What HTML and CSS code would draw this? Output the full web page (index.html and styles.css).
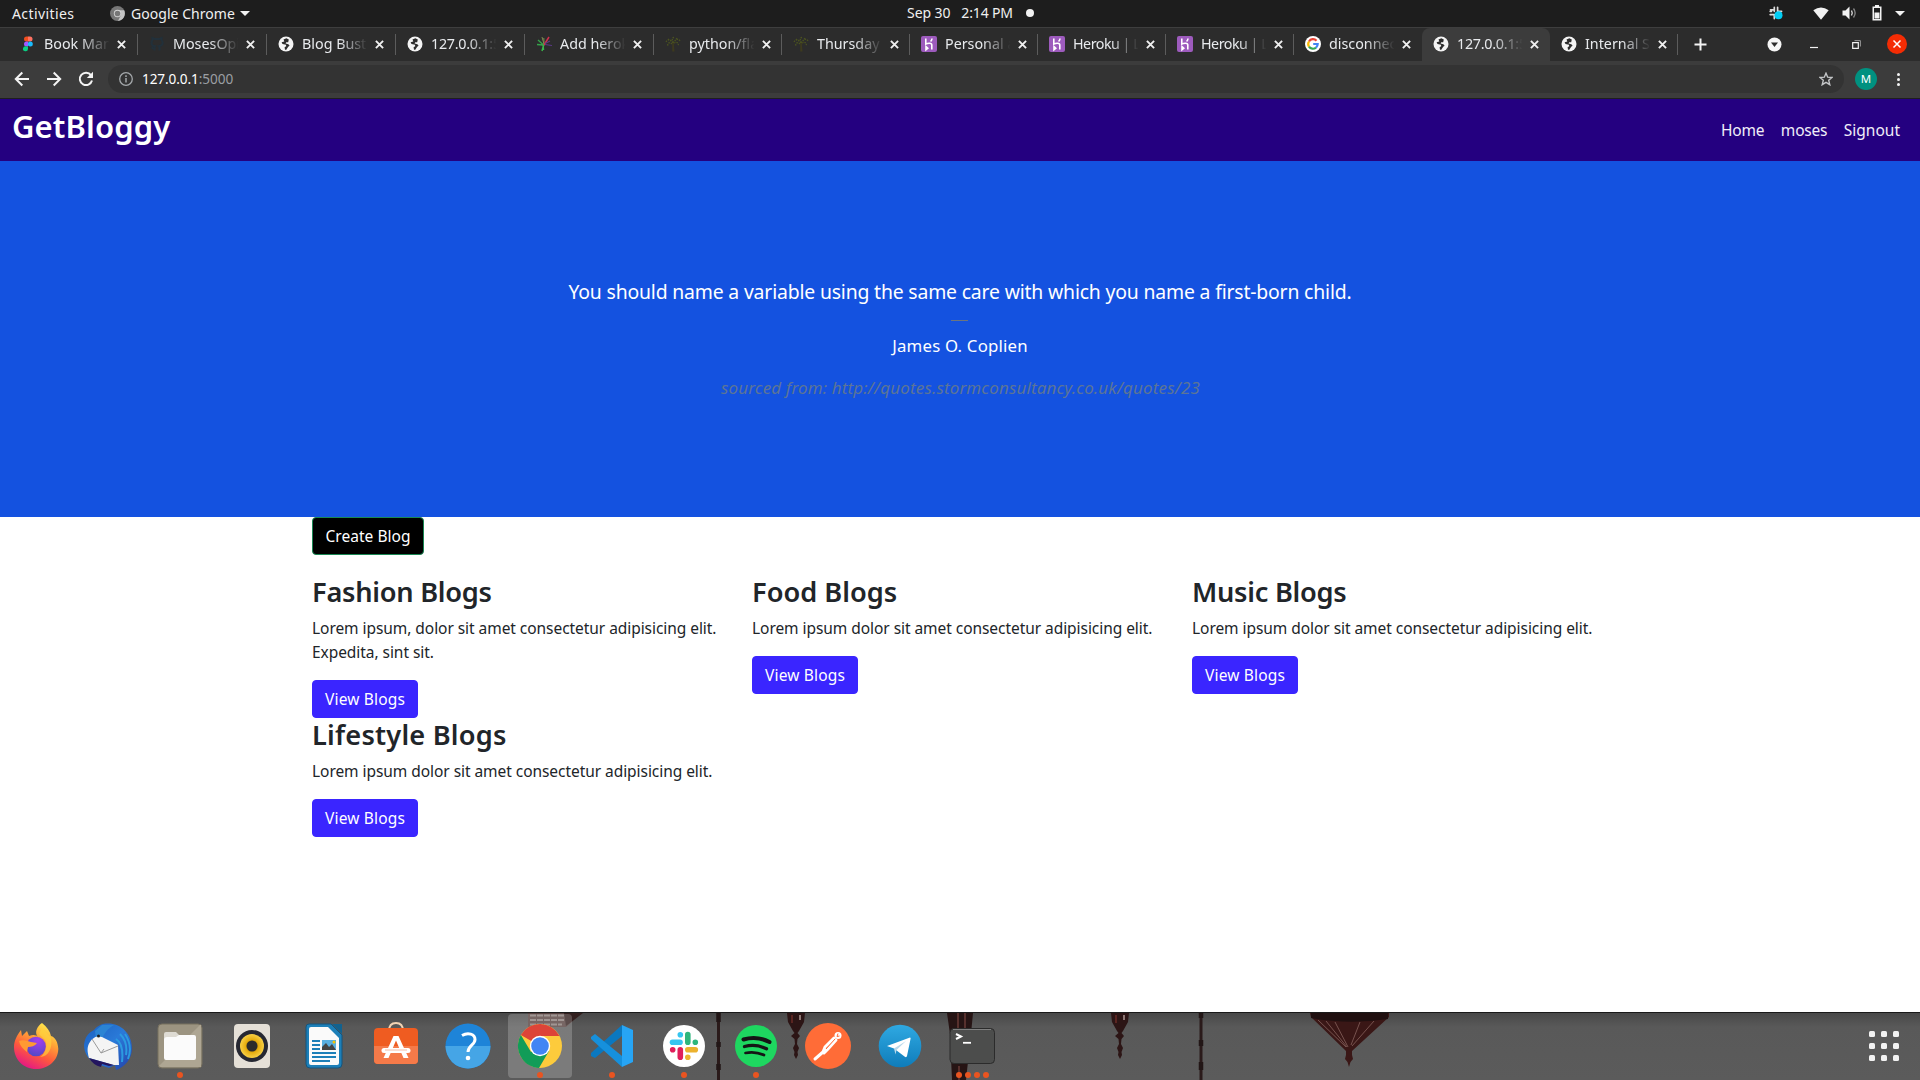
FILE: index.html
```html
<!DOCTYPE html>
<html lang="en">
<head>
<meta charset="utf-8">
<title>GetBloggy</title>
<link rel="stylesheet" href="styles.css">
</head>
<body>
<svg width="0" height="0" class="defs" aria-hidden="true">
  <defs>
    <linearGradient id="g-fox" x1="0.8" y1="0" x2="0.3" y2="1"><stop offset="0" stop-color="#fff44f"/><stop offset=".35" stop-color="#ffa436"/><stop offset=".65" stop-color="#ff5a3c"/><stop offset="1" stop-color="#e31587"/></linearGradient>
    <radialGradient id="g-globe" cx=".6" cy=".2" r=".9"><stop offset="0" stop-color="#a53df0"/><stop offset="1" stop-color="#4a4ac0"/></radialGradient>
    <linearGradient id="g-bird" x1="0" y1="0" x2="1" y2="1"><stop offset="0" stop-color="#1b5fc0"/><stop offset=".5" stop-color="#2a7ad8"/><stop offset="1" stop-color="#2440a8"/></linearGradient>
    <linearGradient id="g-tg" x1="0" y1="0" x2="0" y2="1"><stop offset="0" stop-color="#2fa9e2"/><stop offset="1" stop-color="#0f7cba"/></linearGradient>
    <radialGradient id="g-spk"><stop offset=".3" stop-color="#a87a08"/><stop offset=".55" stop-color="#e6ae10"/><stop offset="1" stop-color="#f7cf45"/></radialGradient>
  </defs>
  <symbol id="globe" viewBox="0 0 16 16"><circle cx="8" cy="8" r="7.500" fill="#f4f4f4"/><path d="M8.400 2.200 5.500 3.600 6.300 5.400 3.600 6.200 4.500 8 8 8.700 8.200 10.300 6.600 11.200 7 13.700 8.300 13.700 10.200 10.700 11.600 9.800 10.400 8.200 7.600 7.400 8.200 6.200 10.200 6.200 10.800 3.600Z" fill="#2c2c2c"/></symbol>
  <symbol id="tree" viewBox="0 0 16 16"><g fill="none" stroke="#4b5320" stroke-width="1.300" stroke-dasharray="1.500 1"><path d="M8 7C5 2 2 4 1 6M8 7C6 1 9 1 10 2M8 7C11 2 14 3 15 5M7 8C4 5 2 8 3 10M9 7C12 5 14 8 13 9M3 3L6 5M12 2L10 5"/></g><path d="M7.200 7.500V15.500H9.500L8.800 7.500 11 5.500" fill="#3d3a1e"/></symbol>
  <symbol id="heroku" viewBox="0 0 16 16"><rect width="16" height="16" rx="2" fill="#9d5bbd"/><path d="M4.800 2.500V8C7 7 10.800 6.700 10.800 9V13.500M11 2.500C11 3.800 10.400 4.700 9.600 5.500M5 10.600V13.800L6.800 12.200Z" fill="none" stroke="#fff" stroke-width="1.600"/></symbol>
  <symbol id="google" viewBox="0 0 16 16"><circle cx="8" cy="8" r="8" fill="#fff"/><g fill="none" stroke-width="2.200"><path d="M11.500 4.700A4.700 4.700 0 0 0 4 5.500" stroke="#ea4335"/><path d="M4 5.500A4.700 4.700 0 0 0 4 10.600" stroke="#fbbc05"/><path d="M4 10.600A4.700 4.700 0 0 0 11 11.600" stroke="#34a853"/><path d="M11 11.600A4.700 4.700 0 0 0 12.700 8H8.200" stroke="#4285f4"/></g></symbol>
  <symbol id="x" viewBox="0 0 8 8"><path d="M.8.8 7.200 7.200M7.200.8.8 7.200" stroke="#f0f0f0" stroke-width="1.700"/></symbol>
</svg>

<div class="desktop">
  <header class="topbar">
    <div class="top-left">
      <span class="activities">Activities</span>
      <svg class="app-icon" width="15" height="15" viewBox="0 0 16 16"><circle cx="8" cy="8" r="8" fill="#777"/><path d="M8 4.500H15A8 8 0 0 1 8.500 16L11.500 10Z" fill="#c4c4c4"/><circle cx="8" cy="8" r="3.900" fill="#d8d8d8"/><circle cx="8" cy="8" r="3" fill="#777"/></svg>
      <span class="app-name">Google Chrome</span>
      <i class="caret"></i>
    </div>
    <div class="clock"><span>Sep 30</span><span>2:14 PM</span><i class="clock-dot"></i></div>
    <div class="tray">
      <svg width="14" height="14" viewBox="0 0 14 14"><g stroke="#ddd" stroke-width="1.700" stroke-linecap="round"><path d="M5.300 1.300V5.300M8.600 1.300V5.300M1.200 5.300H2.500M1.200 8.600H5.300M5.300 8.600V12.600M8.600 5.300H12.600M1.500 3.800H4"/></g><circle cx="9.500" cy="9.200" r="4" fill="#00cdf5"/></svg>
      <svg class="wifi" width="16" height="13" viewBox="0 0 16 13"><path d="M.3 3.200Q8-2.400 15.700 3.200L8 12.800Z" fill="#f2f2f2"/></svg>
      <svg class="vol" width="16" height="14" viewBox="0 0 16 14"><path d="M.5 4.500H3.500L7.500.5V13.500L3.500 9.500H.5Z" fill="#f2f2f2"/><path d="M9.500 4.500Q11 7 9.500 9.500" fill="none" stroke="#ddd" stroke-width="1.400"/><path d="M11.500 2.500Q14.800 7 11.500 11.500" fill="none" stroke="#888" stroke-width="1.300"/></svg>
      <svg class="bat" width="10" height="16" viewBox="0 0 10 16"><path d="M3 0H7V1.500H9.500V15.500H.5V1.500H3Z" fill="#f2f2f2"/><path d="M2 3H8V14H2Z" fill="#1d1d1d"/><path d="M2.500 7.500H7.500V13.500H2.500Z" fill="#f2f2f2"/></svg>
      <i class="caret"></i>
    </div>
  </header>

  <div class="tabstrip">
    <div class="tabs">
      <div class="tab"><svg viewBox="0 0 16 16"><path d="M8 .5H6.500A2.500 2.500 0 0 0 6.500 5.500H8Z" fill="#f24e1e"/><path d="M8 .5H10A2.500 2.500 0 0 1 10 5.500H8Z" fill="#ff7262"/><path d="M8 5.500H6.500A2.500 2.500 0 0 0 6.500 10.500H8Z" fill="#a259ff"/><circle cx="10.300" cy="8" r="2.500" fill="#1abcfe"/><path d="M8 10.500H6.500A2.500 2.500 0 1 0 8 13Z" fill="#0acf83"/></svg><span>Book Mana</span><svg class="x"><use href="#x"/></svg></div>
      <div class="tab"><svg viewBox="0 0 16 16"><path d="M5.500 14.500V12.500Q3.500 12.800 2.800 11M10.500 14.500V11.500Q10.500 10.500 10 10.200C16 9 13 4.500 12.600 4V2L10.500 3H5.500L3.400 2V4C2 6.500 2 10 6 10.200L5.500 11.500" fill="none" stroke="#22303a" stroke-width="2"/></svg><span>MosesOpiy</span><svg class="x"><use href="#x"/></svg></div>
      <div class="tab"><svg><use href="#globe"/></svg><span>Blog Buste</span><svg class="x"><use href="#x"/></svg></div>
      <div class="tab"><svg><use href="#globe"/></svg><span class="ip">127.0.0.1:5</span><svg class="x"><use href="#x"/></svg></div>
      <div class="tab"><svg viewBox="0 0 16 16"><path d="M6 15 8 8M7.500 14 7 8" stroke="#39b54a" stroke-width="1.500"/><path d="M7.500 9 2 4M7 9 1 8.500" stroke="#35a34a" stroke-width="1.300"/><path d="M8 8 6 1M8 8 7.800 2" stroke="#7a8a50"/><path d="M8 9 13 1" stroke="#d22f4c" stroke-width="1.500"/><path d="M9 8.500 16 9.500M9 7.500 14 5" stroke="#5b3a86" stroke-width="1.200"/></svg><span>Add heroku</span><svg class="x"><use href="#x"/></svg></div>
      <div class="tab"><svg><use href="#tree"/></svg><span>python/flas</span><svg class="x"><use href="#x"/></svg></div>
      <div class="tab"><svg><use href="#tree"/></svg><span>Thursday S</span><svg class="x"><use href="#x"/></svg></div>
      <div class="tab"><svg><use href="#heroku"/></svg><span>Personal a</span><svg class="x"><use href="#x"/></svg></div>
      <div class="tab"><svg><use href="#heroku"/></svg><span class="hk">Heroku | Lo</span><svg class="x"><use href="#x"/></svg></div>
      <div class="tab"><svg><use href="#heroku"/></svg><span class="hk">Heroku | Lo</span><svg class="x"><use href="#x"/></svg></div>
      <div class="tab"><svg><use href="#google"/></svg><span>disconnect</span><svg class="x"><use href="#x"/></svg></div>
      <div class="tab active"><svg><use href="#globe"/></svg><span class="ip">127.0.0.1:5</span><svg class="x"><use href="#x"/></svg></div>
      <div class="tab"><svg><use href="#globe"/></svg><span>Internal Se</span><svg class="x"><use href="#x"/></svg></div>
    </div>
    <svg class="plus" width="13" height="13" viewBox="0 0 13 13"><path d="M6.500.5V12.500M.5 6.500H12.500" stroke="#f4f4f4" stroke-width="2"/></svg>
    <div class="winctl">
      <svg width="15" height="15" viewBox="0 0 15 15"><circle cx="7.500" cy="7.500" r="7" fill="#f6f6f6"/><path d="M4 5.500H11L7.500 10Z" fill="#2c2c2c"/></svg>
      <svg class="min" width="8" height="6" viewBox="0 0 8 6"><path d="M0 4.500H8" stroke="#f2f2f2" stroke-width="1.200"/></svg>
      <svg class="max" width="9" height="9" viewBox="0 0 9 9"><path d="M.7 2.700H6.300V8.300H.7Z" fill="none" stroke="#f2f2f2" stroke-width="1.200"/><path d="M2.500.6H8.400V6.500" fill="none" stroke="#999"/></svg>
      <svg class="cls" width="20" height="20" viewBox="0 0 20 20"><circle cx="10" cy="10" r="10" fill="#f42c04"/><path d="M6.500 6.500 13.500 13.500M13.500 6.500 6.500 13.500" stroke="#fff" stroke-width="1.500"/></svg>
    </div>
  </div>

  <div class="toolbar">
    <svg class="nav-ico" width="16" height="16" viewBox="0 0 16 16"><path d="M15 8H2M8.300 1.500 1.800 8 8.300 14.500" fill="none" stroke="#f4f4f4" stroke-width="2"/></svg>
    <svg class="nav-ico" width="16" height="16" viewBox="0 0 16 16"><path d="M1 8H14M7.700 1.500 14.200 8 7.700 14.500" fill="none" stroke="#f4f4f4" stroke-width="2"/></svg>
    <svg class="nav-ico" width="16" height="16" viewBox="0 0 16 16"><path d="M13 4.200A6.200 6.200 0 1 0 14 9.500" fill="none" stroke="#f4f4f4" stroke-width="2"/><path d="M15 .8V7H8.800Z" fill="#f4f4f4"/></svg>
    <div class="omnibox">
      <svg width="14" height="14" viewBox="0 0 14 14"><circle cx="7" cy="7" r="6.300" fill="none" stroke="#a4a8ab" stroke-width="1.300"/><path d="M7 6V10.500M7 3.300V4.900" stroke="#a4a8ab" stroke-width="1.500"/></svg>
      <span class="url">127.0.0.1<em>:5000</em></span>
      <svg class="star" width="14" height="14" viewBox="0 0 14 14"><path d="M7 1.200 8.700 5.200 13 5.500 9.700 8.300 10.800 12.700 7 10.300 3.200 12.700 4.300 8.300 1 5.500 5.300 5.200Z" fill="none" stroke="#c4c6c8" stroke-width="1.400"/></svg>
    </div>
    <div class="avatar">M</div>
    <div class="kebab"><i></i><i></i><i></i></div>
  </div>

  <main class="page">
    <nav class="navbar">
      <a class="brand">GetBloggy</a>
      <div class="links"><a>Home</a><a>moses</a><a class="out">Signout</a></div>
    </nav>
    <section class="hero">
      <p class="quote">You should name a variable using the same care with which you name a first-born child.</p>
      <i class="dash"></i>
      <p class="author">James O. Coplien</p>
      <p class="source">sourced from: http://quotes.stormconsultancy.co.uk/quotes/23</p>
    </section>
    <div class="container">
      <button class="btn create">Create Blog</button>
      <div class="row">
        <article><h3>Fashion Blogs</h3><p>Lorem ipsum, dolor sit amet consectetur adipisicing elit. Expedita, sint sit.</p><button class="btn">View Blogs</button></article>
        <article><h3 class="food">Food Blogs</h3><p>Lorem ipsum dolor sit amet consectetur adipisicing elit.</p><button class="btn">View Blogs</button></article>
        <article><h3>Music Blogs</h3><p>Lorem ipsum dolor sit amet consectetur adipisicing elit.</p><button class="btn">View Blogs</button></article>
        <article><h3 class="life">Lifestyle Blogs</h3><p>Lorem ipsum dolor sit amet consectetur adipisicing elit.</p><button class="btn">View Blogs</button></article>
      </div>
    </div>
  </main>

  <footer class="dock">
    <svg class="wallpaper" width="1920" height="67" viewBox="0 1013 1920 67">
      <path d="M528 1013H582L566 1027H528Z" fill="#55403e"/><path d="M530 1015.500H564M530 1020H564M530 1024.500H562" stroke="#8a7c78" stroke-width="2" stroke-dasharray="6 1"/><path d="M564 1013H583L566 1026Z" fill="#33201f"/>
      <path d="M718.500 1013V1080" stroke="#2a1a1a" stroke-width="3"/><path d="M718.500 1013V1022M718.500 1042V1047M718.500 1064V1070" stroke="#221616" stroke-width="4.500"/>
      <g id="finial"><path d="M787 1013H805L804 1022 799 1031 797.500 1033 800 1036 797.500 1039 797 1044 799 1048 797.500 1052 798 1055 796 1059 794 1055 794.500 1052 793 1048 795 1044 794.500 1039 791 1036 794.500 1033 793 1031 788 1022Z" fill="#2c1515"/><path d="M800 1015V1020" stroke="#8d7774" stroke-width="2"/><path d="M792 1015V1023" stroke="#5a2521" stroke-width="2"/></g>
      <use href="#finial" x="324"/>
      <path d="M947 1013H973L971 1034 966 1080H952L950 1034Z" fill="#261414"/><path d="M958 1013V1040M965 1013V1040M959 1066V1080" stroke="#57302d" stroke-width="2"/>
      <path d="M1201 1013V1080" stroke="#2a1a1a" stroke-width="3"/><path d="M1201 1013V1018M1201 1040V1046M1201 1062V1070" stroke="#221616" stroke-width="4.500"/>
      <path d="M1310 1013H1389V1017L1352 1051V1055L1353 1059 1350.500 1062 1349 1067 1347.500 1062 1345 1059 1346 1055V1051L1311 1017Z" fill="#3a1716"/><path d="M1318 1020 1346 1047M1326 1021 1347 1047M1335 1022 1348 1047M1360 1022 1351 1045M1374 1021 1352 1046" stroke="#77524e" stroke-width="1"/><path d="M1311 1013H1388V1019Q1349 1025 1311 1018Z" fill="#201010"/>
    </svg>
    <div class="apps">
      <div class="app"><svg viewBox="0 0 48 48"><path d="M30 1C35 5 38 9 39 14 43 15 46 20 46.300 27 46 39 36 47 24 47 11 47 2 37 2 25 2 19 5 13 9 8L10 14 15 9 17 14C21 12 25 13 26 15 22 11 25 4 30 1Z" fill="url(#g-fox)"/><circle cx="24" cy="24.500" r="9.800" fill="url(#g-globe)"/><path d="M7 19C11 17 16 19 19 20L25 21C23 24 19 25 16 25L15 30C11 27 8 24 7 19Z" fill="#ff9a32"/><path d="M33 18C36 24 33 32 28 35 36 35 41 26 39 16L30 6 27 12Z" fill="#ffd23c" opacity=".65"/></svg></div>
      <div class="app"><svg viewBox="0 0 48 48"><path d="M19 2C34-1 48 10 48 26 48 37 41 45 32 48L31 43 25 46 13 42C5 39 0 31 0 23 1 15 4 11 10 8 13 4 16 3 19 2Z" fill="url(#g-bird)"/><path d="M18 3 30 3C23 7 20 12 18 17L12 18 11 9Z" fill="#2b84d4"/><path d="M6 20C10 14 14 14 18 15L34 23 35 43 29 43 5 36C3 29 3 24 6 20Z" fill="#f4f4f4"/><path d="M8 17 17 31 34 24M17 31 20 27" fill="none" stroke="#9a9a9a"/><path d="M5 36 30 43 25 44 18 42 17 45Q9 43 5 36Z" fill="#24165f"/><path d="M36 12Q44 20 42 33M41 12Q49 24 44 37M32 17Q40 22 38 40" fill="none" stroke="#2c9be0" stroke-width="2"/><circle cx="14.500" cy="14" r="1.500" fill="#222"/></svg></div>
      <div class="app"><svg viewBox="0 0 48 48"><rect x="2" y="2" width="44" height="44" rx="4" fill="#9c9481" stroke="#77705f"/><path d="M3 44 44 3H45V45H5Z" fill="#aea693"/><path d="M8 12Q8 10 10 10H20L23 13V18H8Z" fill="#dedbd3"/><path d="M8 18Q8 15 11 15H20L23 13H38Q40 13 40 15V36Q40 38 38 38H10Q8 38 8 36Z" fill="#fbfbfb"/></svg><span class="dots"><i></i></span></div>
      <div class="app"><svg viewBox="0 0 48 48"><rect x="6" y="2" width="36" height="44" rx="4" fill="#e5e0d7"/><circle cx="24" cy="24" r="16" fill="#262832"/><circle cx="24" cy="24" r="12" fill="url(#g-spk)"/><circle cx="24" cy="24" r="5.500" fill="#2b2b2b"/></svg></div>
      <div class="app"><svg viewBox="0 0 48 48"><path d="M9 2H31L42 13V42Q42 46 38 46H10Q6 46 6 42V5Q6 2 9 2Z" fill="#1c7fb8" stroke="#15557d"/><path d="M32 2H42V12Z" fill="#12628f"/><path d="M9 7Q9 5 11 5H28L39 16V41Q39 43 37 43H11Q9 43 9 41Z" fill="#fafafa"/><path d="M12 19H20M12 23H20M12 27H20M12 31H36M12 35H36M12 39H30" stroke="#1c7fb8" stroke-width="2"/><path d="M22 18H36V28H22Z" fill="#58aee0"/><path d="M22 28V25L26 21 29 25 32 22 36 28Z" fill="#444"/><circle cx="34" cy="20" r="1.500" fill="#f5c400"/></svg></div>
      <div class="app"><svg viewBox="0 0 48 48"><path d="M17 9Q17 1 24 1T31 9" fill="none" stroke="#f2d3b3" stroke-width="2"/><rect x="2" y="6" width="44" height="36" rx="4" fill="#ef5c21"/><path d="M2 24H46V38Q46 42 42 42H6Q2 42 2 38Z" fill="#f57a49"/><path d="M21.500 14H26.500L36.500 36H31.500L24 18.500 16.500 36H11.500Z" fill="#fff"/><path d="M12 28.500H36" stroke="#fff" stroke-width="5" stroke-linecap="round"/><path d="M13 28H35" stroke="#f3bca6" stroke-width="1"/></svg></div>
      <div class="app"><svg viewBox="0 0 48 48"><circle cx="24" cy="24" r="22.500" fill="#1e84d8"/><path d="M1.500 24H46.500A22.500 22.500 0 0 1 1.500 24Z" fill="#45a5e6"/><path d="M18 13.500C24 10 31 12 31 17.500 31 23 24 23.500 24 30" fill="none" stroke="#fff" stroke-width="3"/><circle cx="24" cy="36" r="2.300" fill="#fff"/></svg></div>
      <div class="app focused"><svg viewBox="0 0 48 48"><circle cx="24" cy="24" r="22" fill="#fdcb3c"/><path d="M24 24 4.900 13A22 22 0 0 1 43.500 14H24Z" fill="#dd4438"/><path d="M24 24 33 29 23 46A22 22 0 0 1 4.900 13L15 30Z" fill="#119c58"/><circle cx="24" cy="24" r="10.200" fill="#fff"/><circle cx="24" cy="24" r="8.800" fill="#4285f4"/></svg><span class="dots"><i></i></span></div>
      <div class="app"><svg viewBox="0 0 48 48"><path d="M34 3 3 31V34L7 36 34 14Z" fill="#0a78c0"/><path d="M7 12 3 15V17L34 45V34Z" fill="#1690dc"/><path d="M34 3 45 8V40L34 45Z" fill="#27a5f5"/></svg><span class="dots"><i></i></span></div>
      <div class="app"><svg viewBox="0 0 48 48"><circle cx="24" cy="24" r="21" fill="#fff"/><g stroke-width="5.600" stroke-linecap="round"><path d="M12.500 20.300H20" stroke="#36c5f0"/><path d="M27.800 12.500V20.300M35.300 20.300H35.310" stroke="#2eb67d"/><path d="M27.800 27.800H35.300M27.800 35.300V35.310" stroke="#ecb22e"/><path d="M20.300 27.800V35.300M12.700 27.800H12.710" stroke="#e01e5a"/><path d="M20.300 12.700V12.710" stroke="#36c5f0"/></g></svg><span class="dots"><i></i></span></div>
      <div class="app"><svg viewBox="0 0 48 48"><circle cx="24" cy="24" r="21" fill="#1ed760"/><g fill="none" stroke="#151515" stroke-linecap="round"><path d="M11.500 17.500Q25 13.500 37.500 20" stroke-width="4"/><path d="M12.500 24.500Q24 21.500 34.500 26.800" stroke-width="3.300"/><path d="M13.500 31Q23 29 32 33" stroke-width="2.700"/></g></svg><span class="dots"><i></i></span></div>
      <div class="app"><svg viewBox="0 0 48 48"><circle cx="24" cy="24" r="23" fill="#ff6c37"/><circle cx="34" cy="13.500" r="3.500" fill="#fff"/><path d="M30 16 21 25 19 30 11 37M32 18 24 27 20 31" fill="none" stroke="#fff" stroke-width="3" stroke-linecap="round"/><path d="M31 17 22 27M34 11.500 33 14.500 35.500 14" fill="none" stroke="#ff6c37"/></svg></div>
      <div class="app"><svg viewBox="0 0 48 48"><circle cx="24" cy="24" r="21.300" fill="url(#g-tg)"/><path d="M11 24 34 15.500Q35 15.500 34.500 17L31 34Q30.500 36 28.500 34.500L18 26.500Z" fill="#fff"/><path d="M18 26.500 30 19 20.500 28 19.500 32.500Z" fill="#b9d8ea"/></svg></div>
      <div class="app"><svg viewBox="0 0 48 48"><rect x="2" y="6.500" width="44.500" height="35" rx="4" fill="#4c4d4c" stroke="#2b2b2b"/><path d="M5 7.500H43" stroke="#808080"/><path d="M8 12 13 14.500 8 17" fill="none" stroke="#fff" stroke-width="2"/><path d="M15 20.800H23" stroke="#fff" stroke-width="1.800"/></svg><span class="dots"><i></i><i></i><i></i><i></i></span></div>
    </div>
    <div class="grid"><i></i><i></i><i></i><i></i><i></i><i></i><i></i><i></i><i></i></div>
  </footer>
</div>
</body>
</html>
```
FILE: styles.css
```css
* { box-sizing: border-box; }
body { margin: 0; font-family: "Noto Sans", sans-serif; font-size: 15.5px; color: #212529; background: #fff; overflow: hidden; }
p, h3 { margin: 0; }
svg { display: block; flex: none; }
.defs { position: absolute; }
.desktop { width: 1920px; height: 1080px; display: flex; flex-direction: column; }

/* desktop top bar */
.topbar { height: 27px; background: #1d1d1d; color: #f0f0f0; font-size: 14px; line-height: 26px; display: grid; grid-template-columns: 1fr auto 1fr; }
.top-left { display: flex; align-items: center; padding-left: 12px; }
.activities { width: 98px; letter-spacing: .4px; }
.app-name { margin: 0 5px 0 6px; letter-spacing: .04px; white-space: nowrap; }
.caret { border: 5px solid transparent; border-top: 5px solid #f2f2f2; border-bottom: 0; }
.clock { display: flex; align-items: center; margin-left: 21px; padding-bottom: 1px; }
.clock span { letter-spacing: -.1px; white-space: nowrap; }
.clock span + span { margin-left: 11px; letter-spacing: -.15px; }
.clock-dot { width: 8px; height: 8px; border-radius: 50%; background: #f2f2f2; margin-left: 13px; }
.tray { display: flex; align-items: center; justify-content: flex-end; padding: 0 15px 1px 0; }
.wifi { margin-left: 30px; }
.vol { margin-left: 13px; }
.bat { margin: 0 13px 0 14px; }

/* browser tabs */
.tabstrip { height: 34px; background: #2c2c2c; border-top: 1px solid #3e3e3e; display: flex; align-items: center; padding-left: 8.5px; }
.tabs { display: grid; grid-template-columns: repeat(5, 129px) repeat(8, 128px); height: 100%; }
.tab { position: relative; display: flex; align-items: center; padding: 0 0 1px 11px; color: #e8eaed; font-size: 14.3px; }
.tab svg { width: 16px; height: 16px; margin-right: 8.5px; }
.tab span { width: 67px; overflow: hidden; white-space: nowrap; line-height: 22px; -webkit-mask-image: linear-gradient(90deg, #000 55%, transparent 98%); mask-image: linear-gradient(90deg, #000 55%, transparent 98%); }
.tab .ip { letter-spacing: -.25px; }
.tab .hk { letter-spacing: -.5px; }
.tab svg.x { width: 9px; height: 9px; margin: 0 0 0 6px; }
.tab::after { content: ""; position: absolute; right: 0; top: 6px; width: 1px; height: 21px; background: #5c5c5c; }
.tab.active { background: #3c3c3c; border-radius: 8px 8px 0 0; }
.tab.active::after, .tab:nth-child(11)::after { display: none; }
.plus { margin: 0 0 1px 16px; }
.winctl { margin-left: auto; display: flex; align-items: center; padding: 0 13px 1px 0; }
.min { margin: 4px 0 0 27px; }
.max { margin-left: 34px; }
.cls { margin-left: 26px; }
.winctl svg:first-child { margin-right: 1px; }

/* address bar */
.toolbar { height: 38px; background: #3c3c3c; border-bottom: 1px solid #1f1f1f; display: flex; align-items: center; padding: 0 20px 1px 14px; }
.nav-ico { margin-right: 16px; }
.nav-ico:nth-child(3) { margin-right: 14px; }
.omnibox { width: 1736px; height: 28px; border-radius: 14px; background: #333; display: flex; align-items: center; padding: 0 11px; }
.url { margin-left: 9px; font-size: 13.600px; letter-spacing: -.09px; line-height: 26px; color: #fff; }
.url em { font-style: normal; color: #9b9fa3; }
.star { margin-left: auto; }
.avatar { width: 22px; height: 22px; border-radius: 50%; background: #009180; color: #fff; font-size: 11.500px; line-height: 22px; text-align: center; margin-left: 11px; }
.kebab { margin-left: auto; display: flex; flex-direction: column; gap: 2px; }
.kebab i { width: 3px; height: 3px; border-radius: 50%; background: #f4f4f4; }

/* site */
.page { flex: 1; background: #fff; }
.navbar { height: 62px; background: #240080; color: #fff; display: flex; justify-content: space-between; padding: 0 20px 0 12px; }
.brand { font-size: 31px; font-weight: 560; letter-spacing: .1px; line-height: 54px; }
.links { display: flex; gap: 16.500px; line-height: 62px; color: #f0eef8; letter-spacing: -.2px; }
.links .out { letter-spacing: 0; }
.hero { height: 356px; background: #1452e0; color: #fff; display: flex; flex-direction: column; align-items: center; padding-top: 116px; }
.quote { font-size: 19.400px; line-height: 30px; letter-spacing: -.175px; }
.dash { width: 17px; height: 1px; background: #6c757d; margin: 13px 2px 0 0; }
.author { font-size: 16.800px; line-height: 26px; letter-spacing: .2px; margin-top: 12px; }
.source { font-size: 17px; line-height: 26px; font-style: italic; letter-spacing: .15px; color: #5c7596; margin: 16px 0 0 1px; }
.container { width: 1320px; margin-left: 312px; }
.btn { display: block; height: 38px; min-width: 106px; padding: 0 12px; border: 1px solid #3a25ff; border-radius: 4px; background: #3a25ff; color: #fff; font: 15.500px "Noto Sans", sans-serif; letter-spacing: .16px; white-space: nowrap; }
.btn.create { width: 112px; background: #000; border-color: #198754; letter-spacing: .03px; }
.row { display: grid; grid-template-columns: repeat(3, 440px); align-items: start; margin-top: 20px; }
article { padding-right: 24px; }
h3 { font-size: 27.200px; font-weight: 560; line-height: 33px; letter-spacing: -.25px; margin-bottom: 8px; }
h3.food { letter-spacing: 0; }
h3.life { letter-spacing: .22px; }
article p { line-height: 24px; letter-spacing: -.055px; margin-bottom: 16px; }

/* dock */
.dock { position: relative; height: 68px; border-top: 1px solid #1a1a1a; background: linear-gradient(#484848, #595959 14px, #5b5b5b); display: flex; align-items: center; justify-content: space-between; padding: 0 21px 2px 4px; }
.wallpaper { position: absolute; left: 0; top: 0; }
.apps { position: relative; display: flex; gap: 8px; }
.app { position: relative; width: 64px; height: 64px; border-radius: 4px; display: flex; align-items: center; justify-content: center; }
.app > svg { width: 48px; height: 48px; }
.focused { background: rgba(255, 255, 255, .2); }
.dots { position: absolute; bottom: 0; left: 0; width: 100%; display: flex; justify-content: center; gap: 3px; }
.dots i { width: 6px; height: 6px; border-radius: 50%; background: #e95420; }
.grid { position: relative; display: grid; grid-template-columns: repeat(3, 6px); gap: 6px; }
.grid i { width: 6px; height: 6px; border-radius: 1.500px; background: #f2f2f2; }
```
